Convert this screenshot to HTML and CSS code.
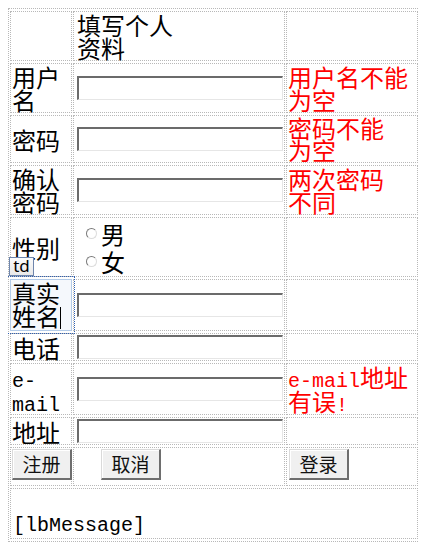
FILE: index.html
```html
<!DOCTYPE html>
<html>
<head>
<meta charset="utf-8">
<link rel="stylesheet" href="styles.css">
</head>
<body>
<table class="form">
  <tr>
    <td class="c1"></td>
    <td class="c2"><div class="title">填写个人<br>资料</div></td>
    <td class="c3"></td>
  </tr>
  <tr>
    <td>用户名</td>
    <td><input class="box" type="text"></td>
    <td class="err">用户名不能<br>为空</td>
  </tr>
  <tr>
    <td>密码</td>
    <td><input class="box" type="password"></td>
    <td class="err tight">密码不能<br>为空</td>
  </tr>
  <tr>
    <td>确认密码</td>
    <td><input class="box" type="password"></td>
    <td class="err">两次密码<br>不同</td>
  </tr>
  <tr class="sex-row">
    <td>性别</td>
    <td>
      <div class="radios">
        <label class="radio-item"><input class="radio" type="radio" name="sex">男</label>
        <label class="radio-item"><input class="radio" type="radio" name="sex">女</label>
      </div>
    </td>
    <td></td>
  </tr>
  <tr>
    <td class="selected"><span class="tip">td</span>真实姓名<span class="caret"></span></td>
    <td><input class="box" type="text"></td>
    <td></td>
  </tr>
  <tr>
    <td>电话</td>
    <td><input class="box" type="text"></td>
    <td></td>
  </tr>
  <tr>
    <td><span class="lat">e-mail</span></td>
    <td><input class="box" type="text"></td>
    <td class="err"><span class="lat">e-mail</span>地址<br>有误<span class="lat">!</span></td>
  </tr>
  <tr>
    <td>地址</td>
    <td><input class="box" type="text"></td>
    <td></td>
  </tr>
  <tr class="btn-row">
    <td><button class="btn">注册</button></td>
    <td><button class="btn btn-cancel">取消</button></td>
    <td><button class="btn btn-login">登录</button></td>
  </tr>
  <tr>
    <td colspan="3" class="msg"><span class="lat">[lbMessage]</span></td>
  </tr>
</table>
</body>
</html>
```

FILE: styles.css
```css
body {
  margin: 8px;
  background: #fff;
  color: #000;
  font-family: "Noto Sans CJK SC", sans-serif;
  font-size: 24px;
  line-height: 23px;
}

.form {
  border: 1px dotted #b8b8b8;
  border-spacing: 1px 2px;
  table-layout: fixed;
  width: 412px;
}

.form td {
  border: 1px dotted #b8b8b8;
  padding: 1px;
  vertical-align: middle;
}

.c1 { width: 58px; }
.c2 { width: 208px; }
.c3 { width: 128px; }

.title {
  padding-left: 2px;
}

.err {
  color: #ff0000;
  padding-left: 2px;
}

.form td.tight {
  line-height: 22px;
}

.lat {
  font-family: "Liberation Mono", monospace;
  font-size: 20px;
  line-height: 14px;
}

.box {
  display: block;
  box-sizing: border-box;
  width: 206px;
  height: 24px;
  margin: 0 0 0 2px;
  padding: 0;
  border-style: solid;
  border-width: 2px 1px 1px 2px;
  border-color: #6b6b6b #e6e6e6 #e6e6e6 #6b6b6b;
  background: #fff;
}

.radios {
  display: flex;
  flex-direction: column;
}

.radio-item {
  display: flex;
  align-items: center;
  height: 28px;
}

.radio {
  appearance: none;
  -webkit-appearance: none;
  box-sizing: border-box;
  width: 11px;
  height: 11px;
  margin: 0 4px 0 11px;
  border-radius: 50%;
  border: 1px solid;
  border-color: #7a7a7a #dcdcdc #dcdcdc #7a7a7a;
  background: #fff;
}

.form td.selected {
  position: relative;
  background: #f5f8fc;
  border: 1px solid #b3cbe8;
  outline: 1px dotted #2e5fb3;
  outline-offset: 2px;
}

.tip {
  position: absolute;
  left: -2px;
  top: -23px;
  box-sizing: border-box;
  width: 25px;
  height: 19px;
  border: 1px solid #6f86ad;
  background: linear-gradient(#fbfbfb, #e9e9e9);
  font-family: "Noto Sans", sans-serif;
  font-size: 17px;
  line-height: 16px;
  text-align: center;
  color: #000;
}

.caret {
  display: inline-block;
  width: 1px;
  height: 22px;
  background: #000;
  vertical-align: -3px;
}

.btn-row td {
  vertical-align: top;
  padding-bottom: 5px;
}

.btn {
  display: block;
  box-sizing: border-box;
  width: 60px;
  height: 31px;
  margin: 0;
  padding: 0;
  font-family: "Noto Sans CJK SC", sans-serif;
  font-size: 19px;
  line-height: 26px;
  color: #111;
  background: #f0f0f0;
  border-style: solid;
  border-width: 1px 2px 2px 1px;
  border-color: #dadada #6e6e6e #6e6e6e #dadada;
  box-shadow: inset 1px 1px #ffffff;
}

.btn-cancel {
  margin-left: 26px;
}

.btn-login {
  margin-left: 1px;
}

.form td.msg {
  padding: 20px 1px 5px 2px;
}
```
